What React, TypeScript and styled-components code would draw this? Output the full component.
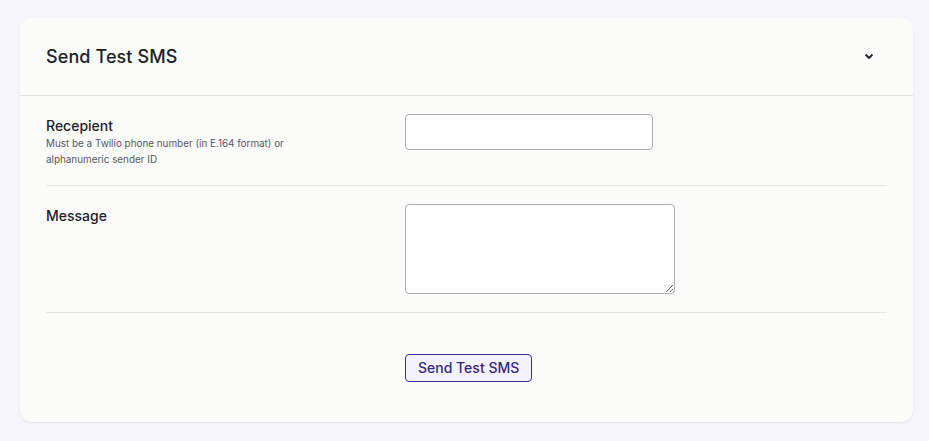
import React from "react";
import styled, { createGlobalStyle } from "styled-components";

const Global = createGlobalStyle`
  html, body { margin: 0; padding: 0; }
  body {
    background: #f5f4fa;
    font-family: Inter, "Noto Sans", "Liberation Sans", sans-serif;
    color: #1d2127;
  }
`;

const Page = styled.div`
  padding: 18px 16px 19px 20px;
`;

const Card = styled.section`
  background: #fbfbf9;
  border-radius: 12px;
  box-shadow: 0 1px 2px rgba(30, 30, 60, 0.08);
`;

const Header = styled.header`
  display: flex;
  align-items: center;
  justify-content: space-between;
  height: 77px;
  padding: 0 36px 0 26px;
  border-bottom: 1px solid #e4e4e2;
`;

const Title = styled.h2`
  margin: 0;
  font-size: 18px;
  font-weight: 500;
  line-height: 24px;
  letter-spacing: 0.1px;
  color: #1d2127;
`;

const Toggle = styled.button`
  display: flex;
  align-items: center;
  justify-content: center;
  width: 16px;
  height: 16px;
  padding: 0;
  border: none;
  background: transparent;
  color: #1d2127;
  cursor: pointer;
`;

const Body = styled.div`
  padding: 0 26px;
`;

const Row = styled.div<{ $last?: boolean }>`
  display: grid;
  grid-template-columns: 359px 1fr;
  padding: 18px 0;
  border-bottom: ${(p) => (p.$last ? "none" : "1px solid #e4e4e2")};
`;

const LabelCol = styled.div`
  display: flex;
  flex-direction: column;
  padding-top: 2px;
`;

const Label = styled.label`
  font-size: 14px;
  font-weight: 500;
  line-height: 20px;
  color: #1d2127;
`;

const Help = styled.span`
  font-size: 9.9px;
  line-height: 15.5px;
  color: #545860;
  max-width: 250px;
`;

const Input = styled.input`
  box-sizing: border-box;
  width: 248px;
  height: 36px;
  border: 1px solid #a9adb2;
  border-radius: 4px;
  background: #ffffff;
  padding: 0 8px;
  font: inherit;
`;

const TextArea = styled.textarea`
  box-sizing: border-box;
  width: 270px;
  height: 90px;
  border: 1px solid #a9adb2;
  border-radius: 4px;
  background: #ffffff;
  padding: 6px 8px;
  font: inherit;
  display: block;
`;

const Actions = styled.div`
  display: grid;
  grid-template-columns: 359px 1fr;
  padding: 41px 0 40px;
`;

const Button = styled.button`
  grid-column: 2;
  justify-self: start;
  box-sizing: border-box;
  height: 28px;
  padding: 0 12px;
  border: 1px solid #3d2a8a;
  border-radius: 4px;
  background: #f5f2ff;
  color: #35287c;
  font-family: Inter, "Noto Sans", "Liberation Sans", sans-serif;
  font-size: 14px;
  font-weight: 500;
  line-height: 26px;
  cursor: pointer;
`;

export default function App() {
  return (
    <>
      <Global />
      <Page>
        <Card>
          <Header>
            <Title>Send Test SMS</Title>
            <Toggle aria-label="Collapse">
              <svg width="10" height="7" viewBox="0 0 10 7">
                <polyline
                  points="1.5,1.5 5,5 8.5,1.5"
                  fill="none"
                  stroke="currentColor"
                  strokeWidth="1.8"
                />
              </svg>
            </Toggle>
          </Header>
          <Body>
            <Row>
              <LabelCol>
                <Label htmlFor="recipient">Recepient</Label>
                <Help>Must be a Twilio phone number (in E.164 format) or alphanumeric sender ID</Help>
              </LabelCol>
              <div>
                <Input id="recipient" type="text" />
              </div>
            </Row>
            <Row>
              <LabelCol>
                <Label htmlFor="message">Message</Label>
              </LabelCol>
              <div>
                <TextArea id="message" />
              </div>
            </Row>
            <Actions>
              <Button>Send Test SMS</Button>
            </Actions>
          </Body>
        </Card>
      </Page>
    </>
  );
}
